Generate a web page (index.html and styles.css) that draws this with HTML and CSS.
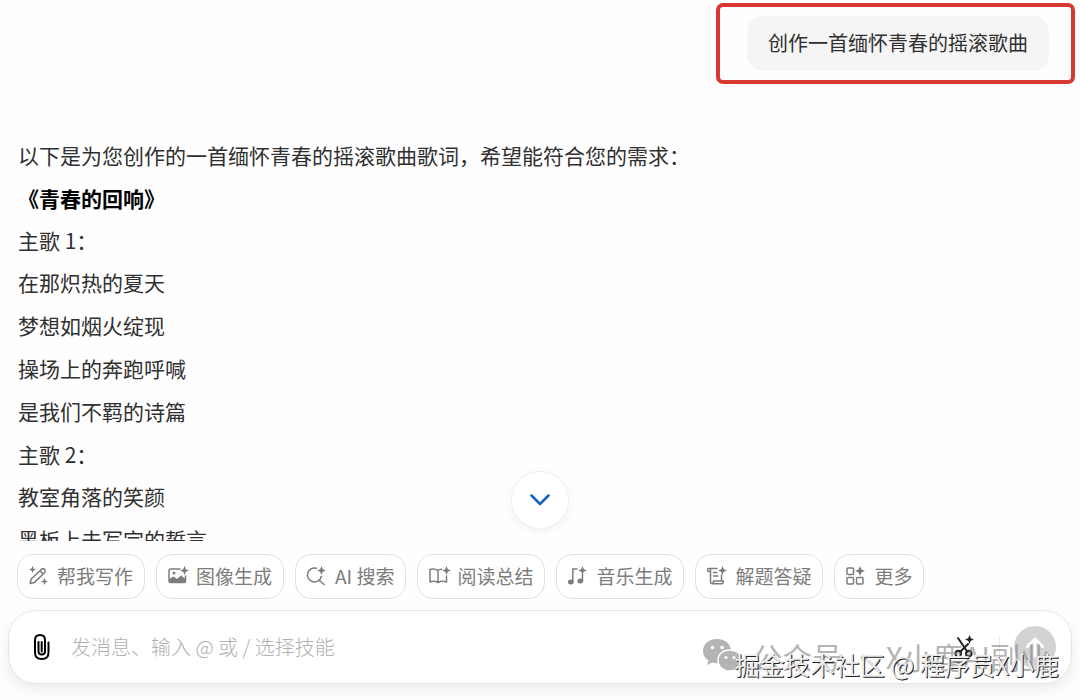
FILE: index.html
```html
<!DOCTYPE html>
<html lang="zh-CN">
<head>
    <meta charset="UTF-8">
    <meta name="viewport" content="width=device-width, initial-scale=1.0">
    <title>青春的回响</title>
    <link rel="stylesheet" href="styles.css">
</head>
<body>
    <svg class="sprite" aria-hidden="true">
        <symbol id="star" viewBox="0 0 8 8">
            <path d="M4 0 L5.200 2.800 L8 4 L5.200 5.200 L4 8 L2.800 5.200 L0 4 L2.800 2.800 Z"/>
        </symbol>
    </svg>

    <main class="thread">
        <div class="highlight">
            <p class="bubble">创作一首缅怀青春的摇滚歌曲</p>
        </div>

        <article class="answer">
            <p>以下是为您创作的一首缅怀青春的摇滚歌曲歌词，希望能符合您的需求：</p>
            <h1>《青春的回响》</h1>
            <h2>主歌 1：</h2>
            <p>在那炽热的夏天</p>
            <p>梦想如烟火绽现</p>
            <p>操场上的奔跑呼喊</p>
            <p>是我们不羁的诗篇</p>
            <h2>主歌 2：</h2>
            <p>教室角落的笑颜</p>
            <p>黑板上未写完的誓言</p>
        </article>

        <button class="scroll-down" type="button" aria-label="滚动到底部">
            <svg width="20" height="12" viewBox="0 0 20 12"><path d="M1.500 1.500 L10 10 L18.500 1.500"/></svg>
        </button>
    </main>

    <footer class="footer">
        <nav class="skills">
            <button class="chip" type="button">
                <svg class="icon" viewBox="0 0 20 20">
                    <path d="M1.200 17.500 L2.200 13 L12.500 3.200 Q14 2 15.600 3.300 Q17 5 15.700 6.500 L5.500 16.400 Z M11 4.800 L14.200 8"/>
                    <use href="#star" x="0" y="0" width="7" height="7"/>
                    <use href="#star" x="12" y="12" width="7" height="7"/>
                </svg>
                帮我写作
            </button>
            <button class="chip" type="button">
                <svg class="icon" viewBox="0 0 20 20">
                    <path d="M12 3 H2.500 Q1 3 1 4.500 V15 Q1 16.500 2.500 16.500 H16 Q17.500 16.500 17.500 15 V10"/>
                    <path class="solid" d="M1 13 L5.500 10.500 L9 13 L13 9.500 L17.500 13 V16.500 H1 Z"/>
                    <circle class="solid" cx="6" cy="7" r="1.500"/>
                    <use href="#star" x="12" y="0" width="9" height="9"/>
                </svg>
                图像生成
            </button>
            <button class="chip" type="button">
                <svg class="icon" viewBox="0 0 20 20">
                    <path d="M9.500 2.200 A7 7 0 1 0 14.300 10.500 M12 14 L17 18.500"/>
                    <use href="#star" x="10" y="0" width="9" height="9"/>
                </svg>
                AI 搜索
            </button>
            <button class="chip" type="button">
                <svg class="icon" viewBox="0 0 20 20">
                    <path d="M9 4.500 Q5 2 1 3.500 V16 Q5 14.500 9 16.500 Q13 14.500 17.500 16 V10 M9 4.500 V16.500 M9 4.500 Q10.500 3.300 12.500 3.200"/>
                    <use href="#star" x="13" y="0" width="9" height="9"/>
                </svg>
                阅读总结
            </button>
            <button class="chip" type="button">
                <svg class="icon" viewBox="0 0 20 20">
                    <path d="M4.800 16 V3 H9 M14.500 15 V8.500"/>
                    <ellipse class="solid" cx="2.800" cy="16" rx="2.800" ry="2.500"/>
                    <ellipse class="solid" cx="12.300" cy="15" rx="2.800" ry="2.500"/>
                    <use href="#star" x="10" y="0" width="9" height="9"/>
                </svg>
                音乐生成
            </button>
            <button class="chip" type="button">
                <svg class="icon" viewBox="0 0 20 20">
                    <path d="M10 2.500 H2 Q0.500 2.500 0.500 4 Q0.500 5.500 2 5.500 H3.500 M3.500 3 V15.500 Q3.500 17.800 5.500 17.800 H14.500 Q16.300 17.800 16.300 15 H6.500 Q6.500 17.500 5 17.800 M14.500 15 V9 M6.500 6.500 H10 M6.500 10 H11"/>
                    <use href="#star" x="11" y="0" width="9" height="9"/>
                </svg>
                解题答疑
            </button>
            <button class="chip" type="button">
                <svg class="icon" viewBox="0 0 20 20">
                    <rect x="1" y="2" width="6.500" height="6.500" rx="1"/>
                    <rect x="1" y="11.500" width="6.500" height="6.500" rx="1"/>
                    <rect x="10.500" y="11.500" width="6.500" height="6.500" rx="1"/>
                    <use href="#star" x="9" y="0" width="10" height="10"/>
                </svg>
                更多
            </button>
        </nav>

        <form class="composer">
            <button class="tool" type="button" aria-label="添加附件">
                <svg width="18" height="28" viewBox="0 0 18 28"><path d="M5.500 9 V18.500 Q5.500 21.500 8.700 21.500 Q12 21.500 12 18.500 V7 Q12 2 7 2 Q2 2 2 7 V19.500 Q2 26 8.700 26 Q15.500 26 15.500 19.500 V9.500 M8.700 9 V18.500"/></svg>
            </button>
            <input class="message" type="text" aria-label="消息" placeholder="发消息、输入 @ 或 / 选择技能">
            <button class="tool cut" type="button" aria-label="剪切">
                <svg width="20" height="24" viewBox="0 0 20 24">
                    <path d="M4 3 L13.500 17 M14 9 L6 17"/>
                    <circle cx="4.300" cy="18.500" r="2.800"/>
                    <circle cx="14.800" cy="18.500" r="2.800"/>
                    <use href="#star" x="11" y="0" width="9" height="9"/>
                </svg>
            </button>
            <span class="divider"></span>
            <button class="send" type="submit" aria-label="发送">
                <svg width="24" height="24" viewBox="0 0 24 24"><path d="M12 21 V4 M4.500 11.500 L12 4 L19.500 11.500"/></svg>
            </button>
        </form>
    </footer>

    <div class="mark mark-account">
        <svg width="46" height="36" viewBox="0 0 46 36">
            <path d="M15 1 C6.500 1 1 6.500 1 13 C1 17 3 20.500 6.500 22.500 L5 27 L10.500 24.500 Q13 25.300 16 25.200 C24 25 29 19.500 29 13 C29 6.500 23.500 1 15 1 Z"/>
            <path class="front" d="M28 12 C20.500 12 16 16.500 16 22.500 C16 28.500 21 33 28 33 Q30.500 33 32.500 32.300 L37 34.500 L36 30.700 Q40 27.500 40 22.500 C40 16.500 35 12 28 12 Z"/>
            <g class="eyes">
                <circle cx="10.500" cy="9.500" r="1.800"/>
                <circle cx="20" cy="9.500" r="1.800"/>
                <circle cx="24" cy="19.500" r="1.500"/>
                <circle cx="32" cy="19.500" r="1.500"/>
            </g>
        </svg>
        <span>公众号 · X小鹿AI副业</span>
    </div>
    <div class="mark mark-site">掘金技术社区 @ 程序员X小鹿</div>
</body>
</html>
```
FILE: styles.css
```css
* {
    box-sizing: border-box;
}
body {
    font-family: "Noto Sans CJK SC", sans-serif;
    margin: 0;
    height: 100vh;
    display: flex;
    flex-direction: column;
    position: relative;
    overflow: hidden;
    background-color: #fefefe;
    color: #303030;
}
p, h1, h2 {
    margin: 0;
    font-size: 21px;
    font-weight: 400;
}
button {
    font-family: inherit;
    border: none;
    padding: 0;
    background: none;
    cursor: pointer;
}
svg {
    fill: none;
    stroke: currentColor;
    stroke-linecap: round;
    stroke-linejoin: round;
    flex: none;
}
.sprite {
    position: absolute;
    width: 0;
    height: 0;
}
#star {
    fill: currentColor;
    stroke: none;
}
.thread {
    flex: 1;
    min-height: 0;
    display: flex;
    flex-direction: column;
    position: relative;
    overflow: hidden;
    padding-top: 3px;
}
.highlight {
    flex: none;
    align-self: flex-end;
    margin-right: 5px;
    padding: 9px 22px 9px 27px;
    border: 4px solid #d73832;
    border-radius: 7px;
}
.bubble {
    padding: 12px 21px 14px;
    border-radius: 16px;
    background-color: #f5f5f5;
    font-size: 20px;
    line-height: 29px;
}
.answer {
    flex: none;
    margin-top: 50px;
    padding: 0 18px;
}
.answer p {
    line-height: 43px;
}
.answer h1, .answer h2 {
    line-height: 42px;
}
.answer h1 {
    color: #000;
    font-weight: 700;
}
.scroll-down {
    position: absolute;
    bottom: 12px;
    left: 50%;
    transform: translateX(-50%);
    width: 58px;
    height: 58px;
    display: flex;
    align-items: center;
    justify-content: center;
    border: 1px solid #f0f0f0;
    border-radius: 50%;
    background-color: #fff;
    box-shadow: 0 2px 8px rgba(0, 0, 0, 0.06);
    color: #1462bd;
}
.scroll-down svg {
    stroke-width: 2.5;
}
.footer {
    padding: 13px 8px 16px;
}
.skills {
    display: flex;
    gap: 11px;
    padding: 0 9px;
}
.chip {
    height: 45px;
    display: flex;
    align-items: center;
    gap: 8px;
    padding: 0 11px 2px;
    border: 1px solid #e0e0e0;
    border-radius: 16px;
    background-color: #fff;
    color: #7c7c7c;
    font-size: 19px;
    line-height: 28px;
    white-space: nowrap;
}
.icon {
    width: 20px;
    height: 20px;
    stroke-width: 1.5;
    overflow: visible;
}
.solid {
    fill: currentColor;
    stroke: none;
}
.composer {
    display: flex;
    align-items: center;
    height: 74px;
    margin-top: 11px;
    padding: 0 15px 0 24px;
    border: 1px solid #e6e6e6;
    border-radius: 28px;
    background-color: #fff;
    box-shadow: 0 6px 14px rgba(0, 0, 0, 0.08);
}
.tool {
    display: flex;
    color: #000;
    stroke-width: 2;
}
.message {
    flex: 1;
    min-width: 0;
    margin-left: 20px;
    padding: 0 0 2px;
    border: none;
    outline: none;
    background: none;
    font-family: inherit;
    font-size: 20px;
    font-weight: 300;
    color: #303030;
}
.message::placeholder {
    color: #b0b0b0;
    opacity: 1;
}
.cut {
    color: #222;
}
.divider {
    width: 1px;
    height: 22px;
    margin: 0 14px 0 25px;
    background-color: #e8e8e8;
}
.send {
    width: 42px;
    height: 42px;
    display: flex;
    align-items: center;
    justify-content: center;
    border-radius: 50%;
    background-color: #d2d2d2;
    color: #fff;
}
.send svg {
    stroke-width: 3;
}

/* Watermarks over the page */
.mark {
    position: absolute;
    display: flex;
    white-space: nowrap;
    pointer-events: none;
}
.mark-account {
    right: 30px;
    bottom: 21px;
    align-items: center;
    gap: 4px;
    color: rgba(130, 130, 130, 0.6);
    font-size: 30px;
    font-weight: 400;
    line-height: 46px;
}
.mark-account svg {
    fill: #b4b4b4;
    stroke: none;
}
.mark-account .front {
    stroke: #fff;
    stroke-width: 1.5;
}
.mark-account .eyes {
    fill: #fff;
}
.mark-site {
    right: 21px;
    bottom: 18px;
    color: #ececec;
    font-size: 25px;
    line-height: 36px;
    text-shadow: 1px 1px 0 #222;
}
```
